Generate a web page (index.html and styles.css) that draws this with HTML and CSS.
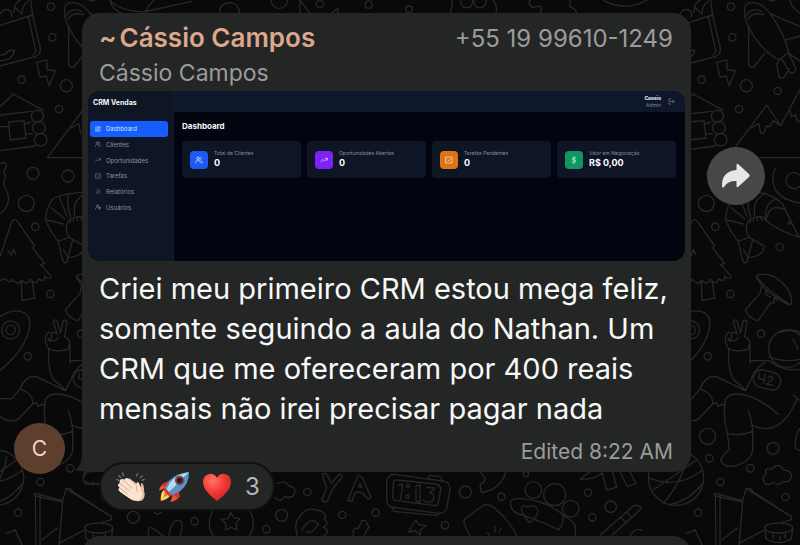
FILE: index.html
```html
<!DOCTYPE html>
<html lang="pt-BR">
<head>
<meta charset="utf-8">
<meta name="viewport" content="width=device-width, initial-scale=1">
<title>Cássio Campos</title>
<link rel="stylesheet" href="styles.css">
</head>
<body>
<svg class="wallpaper" width="800" height="545" aria-hidden="true">
  <defs>
    <g id="doodles" transform="scale(.33333)">
      <!-- plant pot -->
      <path d="M-30 76L68 45L62 0M68 45L90 140Q95 160 76 170L-30 198M55 50L76 146Q80 158 70 166M-30 182Q8 182 14 150Q-8 150 -12 162L-30 166M12 36Q12 8 32 0M16 24Q28 32 34 42M36 42Q34 18 56 2M-30 42Q-20 24 -4 30Q8 36 4 50"/>
      <circle cx="123" cy="20" r="11"/><circle cx="127" cy="112" r="11"/><circle cx="35" cy="239" r="11"/>
      <circle cx="169" cy="257" r="18"/><circle cx="147" cy="327" r="11"/><circle cx="263" cy="273" r="11"/>
      <!-- bolt and space shuttle -->
      <path d="M80 187L110 180L112 210L136 212L118 257L108 228L90 231Z"/>
      <path d="M164 40Q160 5 190 8Q215 8 240 40Q280 95 296 155L268 180Q210 150 176 80Q164 60 164 40ZM168 50Q180 20 216 34M174 60Q184 34 222 44M176 80V192Q180 206 192 200L224 160M240 40Q280 60 340 82M288 120L340 105M268 180L260 192L268 232Q282 240 292 216L298 206M276 178L300 218Q314 224 318 206L296 160L340 190M238 0Q246 5 256 0M300 0Q305 30 340 42"/>
      <!-- log cabin -->
      <path d="M-30 320L10 282L100 332M-30 345L66 334M-30 380H-4M46 372L62 366M46 400L68 402M-30 452L78 438M-4 366L42 362L48 414L0 420Z"/>
      <circle cx="82" cy="349" r="18"/><circle cx="87" cy="383" r="19"/><circle cx="92" cy="419" r="19"/>
      <!-- mountains -->
      <path d="M112 473H340M112 473L230 315L272 377L340 250M184 384L206 370L212 398Q224 406 228 378L240 380L250 362L272 377M300 332L304 350L316 344L324 366L340 360"/>
      <circle cx="69" cy="520" r="18"/><circle cx="174" cy="528" r="18"/><circle cx="49" cy="610" r="24"/>
      <circle cx="76" cy="680" r="11"/><circle cx="269" cy="741" r="11"/><circle cx="312" cy="542" r="24"/>
      <path d="M-30 490Q-8 480 -12 504Q-24 518 -12 530Q-24 545 -14 564Q8 600 -20 634L-30 640M256 506Q240 530 256 570Q280 605 340 610"/>
      <!-- shrimp -->
      <path d="M126 600Q100 640 110 668Q122 696 144 724L160 786Q172 794 174 772Q222 770 222 738L178 712Q160 690 176 660Q220 640 226 660Q260 690 328 712Q310 680 278 612Q230 570 190 580Q140 584 126 600ZM112 660L160 672M122 622L164 656M148 592L172 650M174 582Q170 620 182 652M226 580Q186 600 194 646M256 596Q220 616 228 658M284 628Q236 610 232 652M144 724L178 712M160 748L174 772M188 720L174 772M182 658L180 668M192 652L190 664M202 650V662M212 650L216 662"/>
      <circle cx="298" cy="668" r="4"/>
      <!-- pine tree -->
      <path d="M-30 770L6 664Q14 654 22 664L74 738L68 744L104 790L92 794L124 830Q120 840 104 830Q104 850 86 836Q80 860 60 836Q56 860 34 840Q28 860 8 838Q0 854 -14 836L-30 842M-6 752L4 766L10 748L18 764M34 848L36 902L74 894L66 842"/>
      <circle cx="121" cy="882" r="11"/><circle cx="53" cy="1069" r="11"/><circle cx="213" cy="1001" r="11"/>
      <!-- mushroom -->
      <path d="M198 830Q206 816 250 828Q310 866 304 912Q296 920 268 896Q220 872 198 830ZM200 830Q230 870 300 914M214 860L210 880L166 930Q176 956 204 962L242 908L252 910V892L264 902M228 870V884L242 892"/>
      <!-- map pin -->
      <path d="M-30 950Q0 928 32 934Q66 942 58 986Q46 1040 4 1080L-30 1112"/><circle cx="2" cy="990" r="27"/><circle cx="2" cy="990" r="14"/>
      <!-- peace hand and astronaut -->
      <path d="M116 1046Q112 1120 136 1144Q150 1152 166 1172L194 1116Q210 1094 226 1088M180 1032V1090M116 1046Q140 1060 180 1046M116 1046Q104 1030 106 1010Q114 990 126 1002Q124 1030 114 1016M126 1002Q130 990 142 1002L130 964Q134 954 142 966L152 1000M152 996L160 962Q172 956 170 972L164 1010Q186 1020 176 1040M146 1012Q130 1030 114 1020"/>
      <circle cx="292" cy="1046" r="56"/>
      <path d="M180 1082H238Q286 1120 340 1106M238 1070Q278 1090 340 1076M270 996Q310 984 340 1000M306 1018Q322 1030 322 1048M30 1166Q50 1120 84 1132L166 1172M104 1218Q104 1180 140 1182Q200 1184 266 1244M104 1218Q100 1260 112 1300L118 1348L92 1376Q96 1404 136 1398Q184 1384 188 1350V1290Q186 1260 176 1234M112 1300Q150 1310 188 1294M188 1276Q270 1316 322 1196M310 1186L340 1210M328 1286Q310 1320 318 1346L340 1358M-30 1196L6 1196L30 1166M-30 1250Q0 1270 24 1258L68 1212Q70 1180 34 1168M68 1212L80 1208L84 1218L104 1212"/>
      <rect x="190" y="1114" width="82" height="52" rx="24" transform="rotate(14 231 1140)"/>
      <path d="M208 1120L206 1136L226 1140M226 1124L220 1150M234 1132Q250 1122 248 1138L230 1152L250 1156"/>
      <circle cx="53" cy="1309" r="24"/><circle cx="249" cy="1345" r="18"/><circle cx="58" cy="1375" r="11"/><circle cx="181" cy="1405" r="11"/><circle cx="91" cy="1446" r="11"/><circle cx="24" cy="1538" r="11"/><circle cx="286" cy="1491" r="11"/>
      <!-- globe -->
      <circle cx="-42" cy="1433" r="83"/><path d="M-125 1433Q-40 1470 38 1410M-110 1470L20 1380M-80 1510Q-20 1440 -10 1370M-60 1514Q0 1500 38 1450"/>
      <!-- cloud -->
      <path d="M226 1452Q212 1434 228 1422Q222 1402 244 1408Q266 1384 280 1410Q306 1412 304 1430Q302 1448 282 1444Q260 1462 250 1446Q240 1456 226 1452Z"/>
      <!-- folded map and drum -->
      <path d="M78 1650L76 1488L158 1506L146 1650M76 1488Q66 1476 90 1484L158 1502L168 1466L304 1550Q312 1562 276 1566M168 1466Q180 1460 190 1476L304 1550M90 1484V1640M146 1630L220 1592M96 1620L142 1584M-10 1600L16 1590L38 1640"/>
      <ellipse cx="266" cy="1584" rx="42" ry="15"/><path d="M224 1586L228 1616Q266 1640 304 1616L308 1586M250 1616V1604M270 1620V1608M286 1614V1602"/>
    </g>
  </defs>
  <g class="doodle">
    <use href="#doodles" x="10"/>
    <use href="#doodles" x="690"/>
    <g transform="scale(.33333)">
      <!-- upper edge -->
      <path d="M330 0Q350 30 430 36L575 4M435 36Q446 14 462 0M658 40Q660 8 690 8Q718 10 718 40M900 40V0L930 40M995 40L1014 24V40M1350 40Q1360 10 1355 0M1480 0Q1494 20 1488 40M1590 0Q1584 14 1598 22L1622 18Q1628 30 1620 40M1710 0V20Q1728 26 1730 40M1812 2Q1880 36 1942 0"/>
      <circle cx="838" cy="0" r="25"/><circle cx="960" cy="12" r="11"/><circle cx="1106" cy="14" r="11"/><circle cx="1227" cy="28" r="10"/><circle cx="1400" cy="5" r="18"/><circle cx="1440" cy="5" r="18"/>
    </g>
    <g transform="translate(0 270) scale(.33333)">
      <!-- lower strip -->
      <path d="M250 620Q250 600 276 606L296 596M256 632Q268 650 296 640M462 726Q474 738 484 726M446 796Q440 760 466 780L490 798M506 798Q516 740 544 754Q550 770 540 798"/>
      <circle cx="400" cy="742" r="18"/><circle cx="584" cy="754" r="11"/><circle cx="694" cy="760" r="66"/>
      <path d="M692 728L702 744L720 746L708 760L712 780L694 772L676 780L678 762L664 748L684 746Z"/>
      <circle cx="799" cy="778" r="11"/><circle cx="845" cy="736" r="18"/><circle cx="922" cy="666" r="11"/><circle cx="1027" cy="735" r="11"/><circle cx="1127" cy="728" r="11"/>
      <path d="M830 640Q860 630 866 648Q890 650 884 670Q876 688 854 680Q840 700 826 682M966 612Q978 606 984 620L994 640L1016 614Q1028 610 1026 622L1000 654L996 660L982 694Q970 700 966 688L980 654ZM1044 692L1070 624Q1076 612 1086 622L1112 680Q1110 690 1100 684L1088 668L1066 666L1056 694ZM1076 650L1080 640L1086 652Z"/>
      <path d="M892 796Q880 760 900 738Q920 710 950 720Q984 726 974 748Q990 762 970 772Q994 782 972 798M906 780Q930 736 956 762Q940 790 920 786M1060 796Q1056 770 1074 776L1086 752Q1100 748 1100 762L1108 770L1092 796"/>
      <!-- alarm clock -->
      <path d="M1168 620Q1160 624 1160 640V690Q1162 710 1180 712L1316 730Q1336 730 1340 716L1350 658Q1350 638 1334 634L1188 614Q1170 612 1168 620ZM1180 640Q1180 628 1192 630L1306 642Q1324 646 1322 660L1314 702Q1312 708 1300 706L1190 692Q1176 690 1178 676ZM1284 626L1290 616L1320 620L1326 630M1180 714V724L1310 736L1320 728"/>
      <circle cx="1224" cy="648" r="5"/><circle cx="1222" cy="680" r="5"/>
      <path d="M1196 646L1208 642L1202 688M1246 650L1260 644V696L1248 694V656M1280 652L1304 654L1290 668Q1306 672 1300 688Q1288 706 1270 690"/>
      <circle cx="1396" cy="666" r="18"/><circle cx="1504" cy="680" r="11"/><circle cx="1335" cy="766" r="11"/><circle cx="1578" cy="612" r="8"/>
      <path d="M1440 606Q1470 630 1440 644L1444 668Q1500 660 1518 606M1248 750L1256 764L1278 766L1262 780L1260 796L1246 782L1226 786L1236 768Z"/>
      <path d="M1200 798M1410 798L1392 762Q1390 748 1402 742L1450 706Q1464 700 1480 712Q1530 750 1550 798M1462 788L1468 796M1484 770L1486 784M1504 774L1498 786"/>
      <circle cx="1600" cy="660" r="25"/><circle cx="1664" cy="674" r="33"/><circle cx="1712" cy="716" r="25"/>
      <path d="M1534 712Q1522 684 1560 686Q1640 690 1690 736Q1690 766 1676 780Q1640 760 1570 736Q1540 730 1534 712ZM1564 716Q1568 700 1584 712Q1600 700 1612 716Q1620 734 1590 758Q1570 742 1564 716M1692 738Q1726 756 1726 770V796"/>
      <circle cx="1764" cy="668" r="11"/><circle cx="1832" cy="710" r="17"/><circle cx="1777" cy="742" r="11"/>
      <path d="M1740 628L1770 606M1806 606L1820 660L1850 652L1838 606M1862 608L1882 650L1908 640L1890 606M1740 628Q1780 630 1806 610M1800 796L1900 708Q1918 702 1924 716L1836 796M1862 742L1878 758M1880 726L1894 742M1890 796Q1908 770 1926 782"/>
    </g>
  </g>
</svg>

<main class="chat">
  <div class="row">
    <div class="avatar">C</div>
    <article class="bubble">
      <svg class="tail" viewBox="0 0 24 30" aria-hidden="true"><path d="M7 0V12Q7 23 0 28Q7 30 24 30V0Z"/></svg>
      <header class="sender">
        <h1><span>~</span>Cássio Campos</h1>
        <span class="phone">+55 19 99610-1249</span>
      </header>
      <p class="contact">Cássio Campos</p>

      <section class="crm">
        <aside class="side">
          <strong class="brand">CRM Vendas</strong>
          <nav>
            <a class="on" href="#"><svg viewBox="0 0 24 24"><path d="M3 3h7v9H3zM14 3h7v5h-7zM14 12h7v9h-7zM3 16h7v5H3z"/></svg>Dashboard</a>
            <a href="#"><svg viewBox="0 0 24 24"><path d="M2 21v-2a5 5 0 0 1 5-5h4a5 5 0 0 1 5 5v2M17 4a4 4 0 0 1 0 7M22 21v-2a4 4 0 0 0-3-4"/><circle cx="9" cy="7" r="4"/></svg>Clientes</a>
            <a href="#"><svg viewBox="0 0 24 24"><path d="M2 17l6.500-6.500 5 5L22 7M16 7h6v6"/></svg>Oportunidades</a>
            <a href="#"><svg viewBox="0 0 24 24"><path d="M3 3h18v18H3zM8 12l3 3 5-6"/></svg>Tarefas</a>
            <a href="#"><svg viewBox="0 0 24 24"><path d="M5 21v-6M12 21V3M19 21V9"/></svg>Relatórios</a>
            <a href="#"><svg viewBox="0 0 24 24"><path d="M2 21v-2a6 6 0 0 1 9-5"/><circle cx="9" cy="7" r="4"/><circle cx="18" cy="16" r="3"/><path d="M18 11v2M18 19v2M13 16h2M21 16h2"/></svg>Usuários</a>
          </nav>
        </aside>
        <div class="top">
          <div class="user"><b>Cassio</b><small>Admin</small></div>
          <svg viewBox="0 0 24 24" aria-hidden="true"><path d="M9 21H4V3h5M16 17l5-5-5-5M21 12H9"/></svg>
        </div>
        <div class="board">
          <h2>Dashboard</h2>
          <ul class="stats">
            <li><i class="blue"><svg viewBox="0 0 24 24"><path d="M2 21v-2a5 5 0 0 1 5-5h4a5 5 0 0 1 5 5v2M17 4a4 4 0 0 1 0 7M22 21v-2a4 4 0 0 0-3-4"/><circle cx="9" cy="7" r="4"/></svg></i><p>Total de Clientes<b>0</b></p></li>
            <li><i class="purple"><svg viewBox="0 0 24 24"><path d="M2 17l6.500-6.500 5 5L22 7M16 7h6v6"/></svg></i><p>Oportunidades Abertas<b>0</b></p></li>
            <li><i class="orange"><svg viewBox="0 0 24 24"><path d="M3 3h18v18H3zM8 12l3 3 5-6"/></svg></i><p>Tarefas Pendentes<b>0</b></p></li>
            <li><i class="green"><svg viewBox="0 0 24 24"><path d="M12 1v22M17 6H10a3 3 0 0 0 0 6h4a3 3 0 0 1 0 6H6"/></svg></i><p>Valor em Negociação<b>R$ 0,00</b></p></li>
          </ul>
        </div>
      </section>

      <p class="text">Criei meu primeiro CRM estou mega feliz, somente seguindo a aula do Nathan. Um CRM que me ofereceram por 400 reais mensais não irei precisar pagar nada</p>
      <p class="meta">Edited <time>8:22 AM</time></p>
    </article>
    <button class="forward" aria-label="Encaminhar">
      <svg viewBox="0 0 30 26" aria-hidden="true"><path d="M15.500 2Q15.500 0 17.500 1.500L28 11Q29.500 12.500 28 14L17.500 23.500Q15.500 25 15.500 23V18Q7 17.500 3.500 23.500Q1.500 26 1 23Q0.500 8.500 15.500 7Z"/></svg>
    </button>
  </div>

  <button class="reactions">
    <svg viewBox="0 0 32 32" aria-label="Palmas">
      <g stroke="#64717a" stroke-width="1.500" stroke-linecap="round"><path d="M3 4l2 2M7 1l1 3M1 8l2 1M22 4l1-2M26 6l2-2M28 9l2-1"/></g>
      <path fill="#e6bda1" d="M12 8Q14 6 16 8L27 16Q26 11 28 12Q30 14 30 21Q32 26 28 30Q22 33 15 28L5 19Q3 16 8 16Z"/>
      <path fill="#fbe1cf" d="M9 8Q11 5 14 8L22 15Q21 10 24 11Q26 14 27 20Q30 25 26 29Q21 33 14 28L4 21Q1 18 4 17Q0 13 4 12Q3 6 9 8Z"/>
      <path fill="none" stroke="#d9a98b" stroke-width="1" stroke-linecap="round" d="M8 9l9 8M4 12l10 8M4 17l8 6M22 15q-1 3 1 6"/>
    </svg>
    <svg viewBox="0 0 32 32" aria-label="Foguete">
      <path fill="#f1532e" d="M10 10L5 12Q1 15 0 20L7 17ZM21 21L22 26Q18 31 12 32L15 24Z"/>
      <path fill="#d52f2b" d="M11 9L3 13L8 18ZM22 20L20 28L14 23Z"/>
      <path fill="#ffd64d" d="M7 18Q1 20 2 31Q11 29 13 23Z"/><path fill="#ef7b25" d="M8 20Q5 22 5 27Q10 25 12 22Z"/>
      <path fill="#5b91c8" d="M32 0Q19 1 11 9L6 17L14 25L23 20Q32 13 32 0Z"/>
      <path fill="#b9d9ee" d="M32 0Q18 3 12 11L8 18L11 21L28 4Z"/>
      <path fill="#ca3e32" d="M6 17L14 25L11 26L5 20Z"/>
      <circle cx="22" cy="9" r="5" fill="#8c3f43"/><circle cx="22" cy="9" r="3" fill="#20202d"/>
    </svg>
    <svg viewBox="0 0 32 32" aria-label="Coração">
      <defs><radialGradient id="heart" cx=".35" cy=".25" r=".8"><stop offset="0" stop-color="#ff7569"/><stop offset=".5" stop-color="#f33c36"/><stop offset="1" stop-color="#cf211f"/></radialGradient></defs>
      <path fill="url(#heart)" d="M16 6Q13 1 8 2Q1 3 1 11Q1 20 16 31Q31 20 31 11Q31 3 24 2Q19 1 16 6Z"/>
    </svg>
    <span>3</span>
  </button>
  <div class="next"></div>
</main>
</body>
</html>
```
FILE: styles.css
```css
* { box-sizing: border-box; margin: 0; }

body {
  min-height: 100vh;
  background: #090909;
  color: #f7f8f7;
  font-family: Inter, "Liberation Sans", sans-serif;
  overflow: hidden;
}

button { border: 0; padding: 0; font: inherit; color: inherit; }

.wallpaper { position: absolute; top: 0; left: 0; z-index: -1; }
.doodle { fill: none; stroke: #282828; stroke-width: 4; stroke-linecap: round; stroke-linejoin: round; }

.chat { padding-top: 13px; }

.row {
  display: grid;
  grid-template-columns: 82px 1fr 109px;
}

.avatar {
  align-self: end;
  display: grid;
  place-items: center;
  width: 51px;
  height: 51px;
  margin: 0 0 -2px 14px;
  border-radius: 50%;
  background: #5e3f2d;
  color: #f5d5c2;
  font-size: 21px;
}

.bubble {
  position: relative;
  padding: 8px 6px;
  border-radius: 18px;
  background: #242625;
}

.tail { position: absolute; left: -7px; bottom: 0; width: 24px; height: 30px; fill: #242625; }

.sender {
  display: flex;
  justify-content: space-between;
  align-items: baseline;
  height: 34px;
  padding: 0 12px 0 11px;
}

.sender h1 { display: flex; gap: 3px; font-size: 26px; line-height: 34px; font-weight: 600; color: #dca78c; }
.phone { font-size: 24px; line-height: 34px; color: #9a9c9b; }
.contact { padding: 0 11px; font-size: 23px; line-height: 36px; color: #9a9c9b; }

.crm {
  display: grid;
  grid-template: 21px 1fr / 86px 1fr;
  height: 170px;
  border-radius: 12px;
  overflow: hidden;
  background: #02040f;
}

.crm svg { fill: none; stroke: currentColor; stroke-width: 2; stroke-linecap: round; stroke-linejoin: round; }

.side { grid-row: 1 / 3; background: #0e1525; border-right: 1px solid #141c2e; }
.brand { display: block; padding-left: 5px; font-size: 7px; line-height: 24px; font-weight: 700; }

.side nav { display: grid; grid-auto-rows: 1fr; height: 94px; margin: 6px 5px 0 2px; }
.side a {
  display: flex;
  align-items: center;
  gap: 5px;
  padding-left: 5px;
  border-radius: 3px;
  color: #8b94a5;
  font-size: 6px;
  text-decoration: none;
}
.side a.on { background: #155dfc; color: #d5e2ff; }
.side svg { width: 6px; height: 6px; }

.top {
  display: flex;
  align-items: center;
  justify-content: flex-end;
  gap: 7px;
  padding-right: 10px;
  background: #0f172a;
}
.top svg { width: 7px; height: 7px; color: #8b94a5; }
.user { display: grid; text-align: right; font-size: 5px; line-height: 7px; }
.user small { font-size: 5px; line-height: 6px; color: #7c8596; }

.board { padding: 8px 9px 0 8px; }
.board h2 { font-size: 8px; line-height: 12px; font-weight: 700; }

.stats {
  display: grid;
  grid-template-columns: repeat(4, 1fr);
  gap: 6px;
  margin-top: 9px;
  padding: 0;
  list-style: none;
}
.stats li {
  display: flex;
  align-items: center;
  gap: 6px;
  height: 37px;
  padding-left: 8px;
  border-radius: 4px;
  background: #0e1525;
}
.stats i { display: grid; place-items: center; width: 18px; height: 18px; border-radius: 4px; color: #eef2ff; }
.stats svg { width: 8px; height: 8px; }
.stats p { font-size: 5px; line-height: 7px; color: #858e9f; }
.stats b { display: block; font-size: 9px; line-height: 12px; color: #fff; }
.blue { background: #1d5bf0; }
.purple { background: #7f22f5; }
.orange { background: #de7412; }
.green { background: #0f9661; }

.text { padding: 8px 11px 0; font-size: 29px; line-height: 40px; }
.meta { padding: 10px 12px 0 0; text-align: right; font-size: 21px; line-height: 25px; color: #9a9c9b; }

.forward {
  display: grid;
  place-items: center;
  width: 58px;
  height: 58px;
  margin: 134px 0 0 16px;
  border-radius: 50%;
  background: #464748;
}
.forward svg { width: 30px; height: 26px; fill: #e7e7e7; }

.reactions {
  position: relative;
  display: flex;
  align-items: center;
  gap: 13px;
  height: 49px;
  margin: -10px 0 0 99px;
  padding: 0 13px 0 15px;
  border: 2px solid #101111;
  border-radius: 25px;
  background: #242625;
}
.reactions svg { width: 30px; height: 30px; }
.reactions span { font-size: 24px; color: #b5b7b6; }

.next {
  height: 40px;
  margin: 25px 109px 0 82px;
  border-radius: 18px;
  background: #242625;
}
```
